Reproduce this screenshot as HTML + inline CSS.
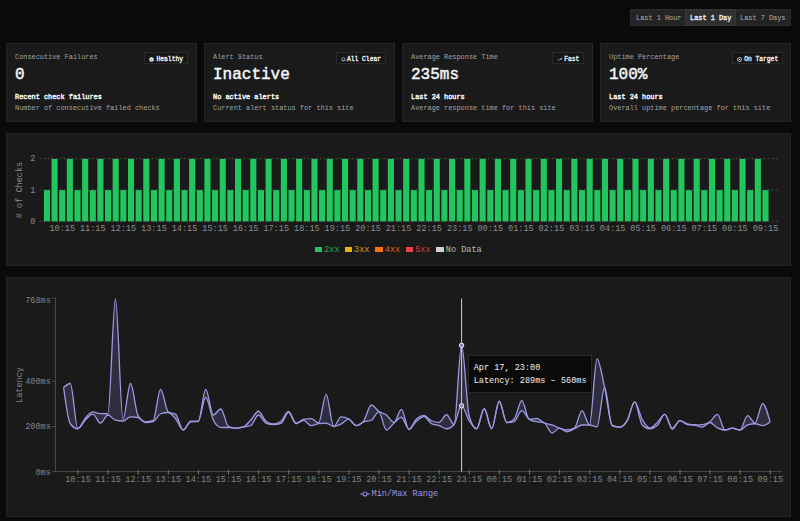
<!DOCTYPE html>
<html><head><meta charset="utf-8"><style>
html,body{margin:0;padding:0;}
body{width:800px;height:521px;overflow:hidden;background:#0a0a0a;position:relative;font-family:"Liberation Mono", monospace;}
.t{position:absolute;white-space:pre;font-family:"Liberation Mono", monospace;}
.b{position:absolute;}
</style></head><body>
<div class="b" style="left:630px;top:9px;width:161px;height:17px;background:#242424;border:1px solid #2c2c2c;box-sizing:border-box;"></div>
<div class="b" style="left:685px;top:9px;width:51px;height:17px;background:#2f2f2f;border:1px solid #383838;box-sizing:border-box;"></div>
<div class="t" style="left:636.00px;top:14.71px;font-size:6.9px;line-height:6.9px;color:#b0b0b0;font-weight:400;letter-spacing:0px;transform:scaleY(1.0);transform-origin:0 5.29px;">Last 1 Hour</div>
<div class="t" style="left:690.00px;top:14.71px;font-size:6.9px;line-height:6.9px;color:#f5f5f5;font-weight:400;letter-spacing:0px;transform:scaleY(1.0);transform-origin:0 5.29px;-webkit-text-stroke:0.3px #f5f5f5;">Last 1 Day</div>
<div class="t" style="left:740.00px;top:14.71px;font-size:6.9px;line-height:6.9px;color:#b0b0b0;font-weight:400;letter-spacing:0px;transform:scaleY(1.0);transform-origin:0 5.29px;">Last 7 Days</div>
<div class="b" style="left:6px;top:43px;width:191px;height:79px;background:#1a1a1a;border:1px solid #242424;box-sizing:border-box;"></div>
<div class="t" style="left:15.00px;top:54.41px;font-size:6.9px;line-height:6.9px;color:#a3a3a3;font-weight:400;letter-spacing:0px;transform:scaleY(1.1);transform-origin:0 5.29px;">Consecutive Failures</div>
<div class="t" style="left:15.00px;top:67.44px;font-size:16px;line-height:16px;color:#f5f5f5;font-weight:400;letter-spacing:0px;transform:scaleY(1.05);transform-origin:0 12.26px;-webkit-text-stroke:0.45px #f5f5f5;">0</div>
<div class="t" style="left:15.00px;top:93.71px;font-size:6.9px;line-height:6.9px;color:#f5f5f5;font-weight:400;letter-spacing:0px;transform:scaleY(1.1);transform-origin:0 5.29px;-webkit-text-stroke:0.4px #f5f5f5;">Recent check failures</div>
<div class="t" style="left:15.00px;top:105.21px;font-size:6.9px;line-height:6.9px;color:#a3a3a3;font-weight:400;letter-spacing:0px;transform:scaleY(1.1);transform-origin:0 5.29px;">Number of consecutive failed checks</div>
<div class="b" style="left:144px;top:52.2px;width:44px;height:12.3px;background:#161616;border:1px solid #2a2a2a;box-sizing:border-box;"></div>
<div class="t" style="left:156.54px;top:57.07px;font-size:6.3px;line-height:6.3px;color:#f5f5f5;font-weight:400;letter-spacing:0px;transform:scaleY(1.0);transform-origin:0 4.83px;-webkit-text-stroke:0.3px #f5f5f5;">Healthy</div>
<svg class="b" style="left:149.2px;top:56.8px" width="5" height="5" viewBox="0 0 24 24"><circle cx="12" cy="12" r="11" fill="#f5f5f5"/><path d="M7 12.5l3.5 3.5 6.5-7" stroke="#171717" stroke-width="3" fill="none"/></svg>
<div class="b" style="left:204px;top:43px;width:191px;height:79px;background:#1a1a1a;border:1px solid #242424;box-sizing:border-box;"></div>
<div class="t" style="left:213.00px;top:54.41px;font-size:6.9px;line-height:6.9px;color:#a3a3a3;font-weight:400;letter-spacing:0px;transform:scaleY(1.1);transform-origin:0 5.29px;">Alert Status</div>
<div class="t" style="left:213.00px;top:67.44px;font-size:16px;line-height:16px;color:#f5f5f5;font-weight:400;letter-spacing:0px;transform:scaleY(1.05);transform-origin:0 12.26px;-webkit-text-stroke:0.45px #f5f5f5;">Inactive</div>
<div class="t" style="left:213.00px;top:93.71px;font-size:6.9px;line-height:6.9px;color:#f5f5f5;font-weight:400;letter-spacing:0px;transform:scaleY(1.1);transform-origin:0 5.29px;-webkit-text-stroke:0.4px #f5f5f5;">No active alerts</div>
<div class="t" style="left:213.00px;top:105.21px;font-size:6.9px;line-height:6.9px;color:#a3a3a3;font-weight:400;letter-spacing:0px;transform:scaleY(1.1);transform-origin:0 5.29px;">Current alert status for this site</div>
<div class="b" style="left:335.5px;top:52.2px;width:50.5px;height:12.3px;background:#161616;border:1px solid #2a2a2a;box-sizing:border-box;"></div>
<div class="t" style="left:346.98px;top:57.07px;font-size:6.3px;line-height:6.3px;color:#f5f5f5;font-weight:400;letter-spacing:0px;transform:scaleY(1.0);transform-origin:0 4.83px;-webkit-text-stroke:0.3px #f5f5f5;">All Clear</div>
<svg class="b" style="left:340.7px;top:56.8px" width="5" height="5" viewBox="0 0 24 24"><path d="M6 8a6 6 0 0 1 12 0c0 7 3 9 3 9H3s3-2 3-9M10.3 21a1.94 1.94 0 0 0 3.4 0" stroke="#f5f5f5" stroke-width="2.6" fill="none"/></svg>
<div class="b" style="left:402px;top:43px;width:191px;height:79px;background:#1a1a1a;border:1px solid #242424;box-sizing:border-box;"></div>
<div class="t" style="left:411.00px;top:54.41px;font-size:6.9px;line-height:6.9px;color:#a3a3a3;font-weight:400;letter-spacing:0px;transform:scaleY(1.1);transform-origin:0 5.29px;">Average Response Time</div>
<div class="t" style="left:411.00px;top:67.44px;font-size:16px;line-height:16px;color:#f5f5f5;font-weight:400;letter-spacing:0px;transform:scaleY(1.05);transform-origin:0 12.26px;-webkit-text-stroke:0.45px #f5f5f5;">235ms</div>
<div class="t" style="left:411.00px;top:93.71px;font-size:6.9px;line-height:6.9px;color:#f5f5f5;font-weight:400;letter-spacing:0px;transform:scaleY(1.1);transform-origin:0 5.29px;-webkit-text-stroke:0.4px #f5f5f5;">Last 24 hours</div>
<div class="t" style="left:411.00px;top:105.21px;font-size:6.9px;line-height:6.9px;color:#a3a3a3;font-weight:400;letter-spacing:0px;transform:scaleY(1.1);transform-origin:0 5.29px;">Average response time for this site</div>
<div class="b" style="left:552px;top:52.2px;width:32.3px;height:12.3px;background:#161616;border:1px solid #2a2a2a;box-sizing:border-box;"></div>
<div class="t" style="left:564.18px;top:57.07px;font-size:6.3px;line-height:6.3px;color:#f5f5f5;font-weight:400;letter-spacing:0px;transform:scaleY(1.0);transform-origin:0 4.83px;-webkit-text-stroke:0.3px #f5f5f5;">Fast</div>
<svg class="b" style="left:557.2px;top:56.8px" width="5" height="5" viewBox="0 0 24 24"><path d="M22 7l-8.5 8.5-5-5L2 17M16 7h6v6" stroke="#f5f5f5" stroke-width="2.6" fill="none"/></svg>
<div class="b" style="left:600px;top:43px;width:191px;height:79px;background:#1a1a1a;border:1px solid #242424;box-sizing:border-box;"></div>
<div class="t" style="left:609.00px;top:54.41px;font-size:6.9px;line-height:6.9px;color:#a3a3a3;font-weight:400;letter-spacing:0px;transform:scaleY(1.1);transform-origin:0 5.29px;">Uptime Percentage</div>
<div class="t" style="left:609.00px;top:67.44px;font-size:16px;line-height:16px;color:#f5f5f5;font-weight:400;letter-spacing:0px;transform:scaleY(1.05);transform-origin:0 12.26px;-webkit-text-stroke:0.45px #f5f5f5;">100%</div>
<div class="t" style="left:609.00px;top:93.71px;font-size:6.9px;line-height:6.9px;color:#f5f5f5;font-weight:400;letter-spacing:0px;transform:scaleY(1.1);transform-origin:0 5.29px;-webkit-text-stroke:0.4px #f5f5f5;">Last 24 hours</div>
<div class="t" style="left:609.00px;top:105.21px;font-size:6.9px;line-height:6.9px;color:#a3a3a3;font-weight:400;letter-spacing:0px;transform:scaleY(1.1);transform-origin:0 5.29px;">Overall uptime percentage for this site</div>
<div class="b" style="left:731.5px;top:52.2px;width:51.7px;height:12.3px;background:#161616;border:1px solid #2a2a2a;box-sizing:border-box;"></div>
<div class="t" style="left:744.18px;top:57.07px;font-size:6.3px;line-height:6.3px;color:#f5f5f5;font-weight:400;letter-spacing:0px;transform:scaleY(1.0);transform-origin:0 4.83px;-webkit-text-stroke:0.3px #f5f5f5;">On Target</div>
<svg class="b" style="left:736.7px;top:56.8px" width="5" height="5" viewBox="0 0 24 24"><circle cx="12" cy="12" r="9.5" stroke="#f5f5f5" stroke-width="3.5" fill="none"/><circle cx="12" cy="12" r="3.5" fill="#f5f5f5"/></svg>
<div class="b" style="left:6px;top:133px;width:785px;height:133px;background:#1a1a1a;border:1px solid #242424;box-sizing:border-box;"></div>
<svg class="b" style="left:0;top:0" width="800" height="521"><line x1="39.6" y1="158.7" x2="777.7" y2="158.7" stroke="#4a4a4a" stroke-width="1" stroke-dasharray="2 2"/><line x1="39.6" y1="189.9" x2="777.7" y2="189.9" stroke="#4a4a4a" stroke-width="1" stroke-dasharray="2 2"/><line x1="39.6" y1="221.3" x2="777.7" y2="221.3" stroke="#4a4a4a" stroke-width="1" stroke-dasharray="2 2"/><rect x="43.87" y="190.10" width="6.1" height="31.20" fill="#22c55e"/><rect x="51.52" y="158.90" width="6.1" height="62.40" fill="#22c55e"/><rect x="59.16" y="190.10" width="6.1" height="31.20" fill="#22c55e"/><rect x="66.80" y="158.90" width="6.1" height="62.40" fill="#22c55e"/><rect x="74.45" y="190.10" width="6.1" height="31.20" fill="#22c55e"/><rect x="82.09" y="158.90" width="6.1" height="62.40" fill="#22c55e"/><rect x="89.74" y="190.10" width="6.1" height="31.20" fill="#22c55e"/><rect x="97.38" y="158.90" width="6.1" height="62.40" fill="#22c55e"/><rect x="105.03" y="190.10" width="6.1" height="31.20" fill="#22c55e"/><rect x="112.67" y="158.90" width="6.1" height="62.40" fill="#22c55e"/><rect x="120.31" y="190.10" width="6.1" height="31.20" fill="#22c55e"/><rect x="127.96" y="158.90" width="6.1" height="62.40" fill="#22c55e"/><rect x="135.60" y="190.10" width="6.1" height="31.20" fill="#22c55e"/><rect x="143.25" y="158.90" width="6.1" height="62.40" fill="#22c55e"/><rect x="150.89" y="190.10" width="6.1" height="31.20" fill="#22c55e"/><rect x="158.54" y="158.90" width="6.1" height="62.40" fill="#22c55e"/><rect x="166.18" y="190.10" width="6.1" height="31.20" fill="#22c55e"/><rect x="173.82" y="158.90" width="6.1" height="62.40" fill="#22c55e"/><rect x="181.47" y="190.10" width="6.1" height="31.20" fill="#22c55e"/><rect x="189.11" y="158.90" width="6.1" height="62.40" fill="#22c55e"/><rect x="196.76" y="190.10" width="6.1" height="31.20" fill="#22c55e"/><rect x="204.40" y="158.90" width="6.1" height="62.40" fill="#22c55e"/><rect x="212.04" y="190.10" width="6.1" height="31.20" fill="#22c55e"/><rect x="219.69" y="158.90" width="6.1" height="62.40" fill="#22c55e"/><rect x="227.33" y="190.10" width="6.1" height="31.20" fill="#22c55e"/><rect x="234.98" y="158.90" width="6.1" height="62.40" fill="#22c55e"/><rect x="242.62" y="190.10" width="6.1" height="31.20" fill="#22c55e"/><rect x="250.27" y="158.90" width="6.1" height="62.40" fill="#22c55e"/><rect x="257.91" y="190.10" width="6.1" height="31.20" fill="#22c55e"/><rect x="265.55" y="158.90" width="6.1" height="62.40" fill="#22c55e"/><rect x="273.20" y="190.10" width="6.1" height="31.20" fill="#22c55e"/><rect x="280.84" y="158.90" width="6.1" height="62.40" fill="#22c55e"/><rect x="288.49" y="190.10" width="6.1" height="31.20" fill="#22c55e"/><rect x="296.13" y="158.90" width="6.1" height="62.40" fill="#22c55e"/><rect x="303.78" y="190.10" width="6.1" height="31.20" fill="#22c55e"/><rect x="311.42" y="158.90" width="6.1" height="62.40" fill="#22c55e"/><rect x="319.06" y="190.10" width="6.1" height="31.20" fill="#22c55e"/><rect x="326.71" y="158.90" width="6.1" height="62.40" fill="#22c55e"/><rect x="334.35" y="190.10" width="6.1" height="31.20" fill="#22c55e"/><rect x="342.00" y="158.90" width="6.1" height="62.40" fill="#22c55e"/><rect x="349.64" y="190.10" width="6.1" height="31.20" fill="#22c55e"/><rect x="357.28" y="158.90" width="6.1" height="62.40" fill="#22c55e"/><rect x="364.93" y="190.10" width="6.1" height="31.20" fill="#22c55e"/><rect x="372.57" y="158.90" width="6.1" height="62.40" fill="#22c55e"/><rect x="380.22" y="190.10" width="6.1" height="31.20" fill="#22c55e"/><rect x="387.86" y="158.90" width="6.1" height="62.40" fill="#22c55e"/><rect x="395.51" y="190.10" width="6.1" height="31.20" fill="#22c55e"/><rect x="403.15" y="158.90" width="6.1" height="62.40" fill="#22c55e"/><rect x="410.79" y="190.10" width="6.1" height="31.20" fill="#22c55e"/><rect x="418.44" y="158.90" width="6.1" height="62.40" fill="#22c55e"/><rect x="426.08" y="190.10" width="6.1" height="31.20" fill="#22c55e"/><rect x="433.73" y="158.90" width="6.1" height="62.40" fill="#22c55e"/><rect x="441.37" y="190.10" width="6.1" height="31.20" fill="#22c55e"/><rect x="449.02" y="158.90" width="6.1" height="62.40" fill="#22c55e"/><rect x="456.66" y="190.10" width="6.1" height="31.20" fill="#22c55e"/><rect x="464.30" y="158.90" width="6.1" height="62.40" fill="#22c55e"/><rect x="471.95" y="190.10" width="6.1" height="31.20" fill="#22c55e"/><rect x="479.59" y="158.90" width="6.1" height="62.40" fill="#22c55e"/><rect x="487.24" y="190.10" width="6.1" height="31.20" fill="#22c55e"/><rect x="494.88" y="158.90" width="6.1" height="62.40" fill="#22c55e"/><rect x="502.52" y="190.10" width="6.1" height="31.20" fill="#22c55e"/><rect x="510.17" y="158.90" width="6.1" height="62.40" fill="#22c55e"/><rect x="517.81" y="190.10" width="6.1" height="31.20" fill="#22c55e"/><rect x="525.46" y="158.90" width="6.1" height="62.40" fill="#22c55e"/><rect x="533.10" y="190.10" width="6.1" height="31.20" fill="#22c55e"/><rect x="540.75" y="158.90" width="6.1" height="62.40" fill="#22c55e"/><rect x="548.39" y="190.10" width="6.1" height="31.20" fill="#22c55e"/><rect x="556.03" y="158.90" width="6.1" height="62.40" fill="#22c55e"/><rect x="563.68" y="190.10" width="6.1" height="31.20" fill="#22c55e"/><rect x="571.32" y="158.90" width="6.1" height="62.40" fill="#22c55e"/><rect x="578.97" y="190.10" width="6.1" height="31.20" fill="#22c55e"/><rect x="586.61" y="158.90" width="6.1" height="62.40" fill="#22c55e"/><rect x="594.26" y="190.10" width="6.1" height="31.20" fill="#22c55e"/><rect x="601.90" y="158.90" width="6.1" height="62.40" fill="#22c55e"/><rect x="609.54" y="190.10" width="6.1" height="31.20" fill="#22c55e"/><rect x="617.19" y="158.90" width="6.1" height="62.40" fill="#22c55e"/><rect x="624.83" y="190.10" width="6.1" height="31.20" fill="#22c55e"/><rect x="632.48" y="158.90" width="6.1" height="62.40" fill="#22c55e"/><rect x="640.12" y="190.10" width="6.1" height="31.20" fill="#22c55e"/><rect x="647.76" y="158.90" width="6.1" height="62.40" fill="#22c55e"/><rect x="655.41" y="190.10" width="6.1" height="31.20" fill="#22c55e"/><rect x="663.05" y="158.90" width="6.1" height="62.40" fill="#22c55e"/><rect x="670.70" y="190.10" width="6.1" height="31.20" fill="#22c55e"/><rect x="678.34" y="158.90" width="6.1" height="62.40" fill="#22c55e"/><rect x="685.99" y="190.10" width="6.1" height="31.20" fill="#22c55e"/><rect x="693.63" y="158.90" width="6.1" height="62.40" fill="#22c55e"/><rect x="701.27" y="190.10" width="6.1" height="31.20" fill="#22c55e"/><rect x="708.92" y="158.90" width="6.1" height="62.40" fill="#22c55e"/><rect x="716.56" y="190.10" width="6.1" height="31.20" fill="#22c55e"/><rect x="724.21" y="158.90" width="6.1" height="62.40" fill="#22c55e"/><rect x="731.85" y="190.10" width="6.1" height="31.20" fill="#22c55e"/><rect x="739.50" y="158.90" width="6.1" height="62.40" fill="#22c55e"/><rect x="747.14" y="190.10" width="6.1" height="31.20" fill="#22c55e"/><rect x="754.78" y="158.90" width="6.1" height="62.40" fill="#22c55e"/><rect x="762.43" y="190.10" width="6.1" height="31.20" fill="#22c55e"/></svg>
<div class="t" style="left:62.21px;top:224.95px;font-size:8.55px;line-height:8.55px;color:#8a8a8a;font-weight:400;letter-spacing:0px;transform:translateX(-50%) scaleY(1.0);transform-origin:0 6.55px;">10:15</div>
<div class="t" style="left:92.79px;top:224.95px;font-size:8.55px;line-height:8.55px;color:#8a8a8a;font-weight:400;letter-spacing:0px;transform:translateX(-50%) scaleY(1.0);transform-origin:0 6.55px;">11:15</div>
<div class="t" style="left:123.36px;top:224.95px;font-size:8.55px;line-height:8.55px;color:#8a8a8a;font-weight:400;letter-spacing:0px;transform:translateX(-50%) scaleY(1.0);transform-origin:0 6.55px;">12:15</div>
<div class="t" style="left:153.94px;top:224.95px;font-size:8.55px;line-height:8.55px;color:#8a8a8a;font-weight:400;letter-spacing:0px;transform:translateX(-50%) scaleY(1.0);transform-origin:0 6.55px;">13:15</div>
<div class="t" style="left:184.52px;top:224.95px;font-size:8.55px;line-height:8.55px;color:#8a8a8a;font-weight:400;letter-spacing:0px;transform:translateX(-50%) scaleY(1.0);transform-origin:0 6.55px;">14:15</div>
<div class="t" style="left:215.09px;top:224.95px;font-size:8.55px;line-height:8.55px;color:#8a8a8a;font-weight:400;letter-spacing:0px;transform:translateX(-50%) scaleY(1.0);transform-origin:0 6.55px;">15:15</div>
<div class="t" style="left:245.67px;top:224.95px;font-size:8.55px;line-height:8.55px;color:#8a8a8a;font-weight:400;letter-spacing:0px;transform:translateX(-50%) scaleY(1.0);transform-origin:0 6.55px;">16:15</div>
<div class="t" style="left:276.25px;top:224.95px;font-size:8.55px;line-height:8.55px;color:#8a8a8a;font-weight:400;letter-spacing:0px;transform:translateX(-50%) scaleY(1.0);transform-origin:0 6.55px;">17:15</div>
<div class="t" style="left:306.83px;top:224.95px;font-size:8.55px;line-height:8.55px;color:#8a8a8a;font-weight:400;letter-spacing:0px;transform:translateX(-50%) scaleY(1.0);transform-origin:0 6.55px;">18:15</div>
<div class="t" style="left:337.40px;top:224.95px;font-size:8.55px;line-height:8.55px;color:#8a8a8a;font-weight:400;letter-spacing:0px;transform:translateX(-50%) scaleY(1.0);transform-origin:0 6.55px;">19:15</div>
<div class="t" style="left:367.98px;top:224.95px;font-size:8.55px;line-height:8.55px;color:#8a8a8a;font-weight:400;letter-spacing:0px;transform:translateX(-50%) scaleY(1.0);transform-origin:0 6.55px;">20:15</div>
<div class="t" style="left:398.56px;top:224.95px;font-size:8.55px;line-height:8.55px;color:#8a8a8a;font-weight:400;letter-spacing:0px;transform:translateX(-50%) scaleY(1.0);transform-origin:0 6.55px;">21:15</div>
<div class="t" style="left:429.13px;top:224.95px;font-size:8.55px;line-height:8.55px;color:#8a8a8a;font-weight:400;letter-spacing:0px;transform:translateX(-50%) scaleY(1.0);transform-origin:0 6.55px;">22:15</div>
<div class="t" style="left:459.71px;top:224.95px;font-size:8.55px;line-height:8.55px;color:#8a8a8a;font-weight:400;letter-spacing:0px;transform:translateX(-50%) scaleY(1.0);transform-origin:0 6.55px;">23:15</div>
<div class="t" style="left:490.29px;top:224.95px;font-size:8.55px;line-height:8.55px;color:#8a8a8a;font-weight:400;letter-spacing:0px;transform:translateX(-50%) scaleY(1.0);transform-origin:0 6.55px;">00:15</div>
<div class="t" style="left:520.86px;top:224.95px;font-size:8.55px;line-height:8.55px;color:#8a8a8a;font-weight:400;letter-spacing:0px;transform:translateX(-50%) scaleY(1.0);transform-origin:0 6.55px;">01:15</div>
<div class="t" style="left:551.44px;top:224.95px;font-size:8.55px;line-height:8.55px;color:#8a8a8a;font-weight:400;letter-spacing:0px;transform:translateX(-50%) scaleY(1.0);transform-origin:0 6.55px;">02:15</div>
<div class="t" style="left:582.02px;top:224.95px;font-size:8.55px;line-height:8.55px;color:#8a8a8a;font-weight:400;letter-spacing:0px;transform:translateX(-50%) scaleY(1.0);transform-origin:0 6.55px;">03:15</div>
<div class="t" style="left:612.59px;top:224.95px;font-size:8.55px;line-height:8.55px;color:#8a8a8a;font-weight:400;letter-spacing:0px;transform:translateX(-50%) scaleY(1.0);transform-origin:0 6.55px;">04:15</div>
<div class="t" style="left:643.17px;top:224.95px;font-size:8.55px;line-height:8.55px;color:#8a8a8a;font-weight:400;letter-spacing:0px;transform:translateX(-50%) scaleY(1.0);transform-origin:0 6.55px;">05:15</div>
<div class="t" style="left:673.75px;top:224.95px;font-size:8.55px;line-height:8.55px;color:#8a8a8a;font-weight:400;letter-spacing:0px;transform:translateX(-50%) scaleY(1.0);transform-origin:0 6.55px;">06:15</div>
<div class="t" style="left:704.32px;top:224.95px;font-size:8.55px;line-height:8.55px;color:#8a8a8a;font-weight:400;letter-spacing:0px;transform:translateX(-50%) scaleY(1.0);transform-origin:0 6.55px;">07:15</div>
<div class="t" style="left:734.90px;top:224.95px;font-size:8.55px;line-height:8.55px;color:#8a8a8a;font-weight:400;letter-spacing:0px;transform:translateX(-50%) scaleY(1.0);transform-origin:0 6.55px;">08:15</div>
<div class="t" style="left:765.48px;top:224.95px;font-size:8.55px;line-height:8.55px;color:#8a8a8a;font-weight:400;letter-spacing:0px;transform:translateX(-50%) scaleY(1.0);transform-origin:0 6.55px;">09:15</div>
<div class="t" style="left:35.40px;top:155.35px;font-size:8.55px;line-height:8.55px;color:#8a8a8a;font-weight:400;letter-spacing:0px;transform:translateX(-100%) scaleY(1.0);transform-origin:0 6.55px;">2</div>
<div class="t" style="left:35.40px;top:186.65px;font-size:8.55px;line-height:8.55px;color:#8a8a8a;font-weight:400;letter-spacing:0px;transform:translateX(-100%) scaleY(1.0);transform-origin:0 6.55px;">1</div>
<div class="t" style="left:35.40px;top:217.55px;font-size:8.55px;line-height:8.55px;color:#8a8a8a;font-weight:400;letter-spacing:0px;transform:translateX(-100%) scaleY(1.0);transform-origin:0 6.55px;">0</div>
<div class="t" style="left:19.5px;top:190px;font-size:8.55px;line-height:8.55px;color:#8a8a8a;transform:translate(-50%,-50%) rotate(-90deg);">&#35; of Checks</div>
<div class="b" style="left:314.65px;top:246.5px;width:7.5px;height:5.7px;background:#22c55e;box-sizing:border-box;"></div>
<div class="t" style="left:324.15px;top:245.65px;font-size:8.55px;line-height:8.55px;color:#22c55e;font-weight:400;letter-spacing:0px;transform:scaleY(1.0);transform-origin:0 6.55px;opacity:0.85;">2xx</div>
<div class="b" style="left:344.5px;top:246.5px;width:7.5px;height:5.7px;background:#eab308;box-sizing:border-box;"></div>
<div class="t" style="left:354.00px;top:245.65px;font-size:8.55px;line-height:8.55px;color:#eab308;font-weight:400;letter-spacing:0px;transform:scaleY(1.0);transform-origin:0 6.55px;opacity:0.85;">3xx</div>
<div class="b" style="left:375.3px;top:246.5px;width:7.5px;height:5.7px;background:#f97316;box-sizing:border-box;"></div>
<div class="t" style="left:384.80px;top:245.65px;font-size:8.55px;line-height:8.55px;color:#f97316;font-weight:400;letter-spacing:0px;transform:scaleY(1.0);transform-origin:0 6.55px;opacity:0.85;">4xx</div>
<div class="b" style="left:405.7px;top:246.5px;width:7.5px;height:5.7px;background:#ef4444;box-sizing:border-box;"></div>
<div class="t" style="left:415.20px;top:245.65px;font-size:8.55px;line-height:8.55px;color:#ef4444;font-weight:400;letter-spacing:0px;transform:scaleY(1.0);transform-origin:0 6.55px;opacity:0.85;">5xx</div>
<div class="b" style="left:436.3px;top:246.5px;width:7.5px;height:5.7px;background:#d4d4d4;box-sizing:border-box;"></div>
<div class="t" style="left:445.80px;top:245.65px;font-size:8.55px;line-height:8.55px;color:#d4d4d4;font-weight:400;letter-spacing:0px;transform:scaleY(1.0);transform-origin:0 6.55px;opacity:0.85;">No Data</div>
<div class="b" style="left:6px;top:277px;width:785px;height:240px;background:#1a1a1a;border:1px solid #242424;box-sizing:border-box;"></div>
<svg class="b" style="left:0;top:0" width="800" height="521"><line x1="55.4" y1="297.5" x2="55.4" y2="471.6" stroke="#4c4c4c" stroke-width="1"/><line x1="55.4" y1="471.6" x2="782.2" y2="471.6" stroke="#4c4c4c" stroke-width="1"/><line x1="52.4" y1="298.1" x2="55.4" y2="298.1" stroke="#4c4c4c" stroke-width="1"/><line x1="52.4" y1="381.3" x2="55.4" y2="381.3" stroke="#4c4c4c" stroke-width="1"/><line x1="52.4" y1="426.5" x2="55.4" y2="426.5" stroke="#4c4c4c" stroke-width="1"/><line x1="52.4" y1="471.6" x2="55.4" y2="471.6" stroke="#4c4c4c" stroke-width="1"/><line x1="78.00" y1="469.8" x2="78.00" y2="474.6" stroke="#707070" stroke-width="1"/><line x1="108.10" y1="469.8" x2="108.10" y2="474.6" stroke="#707070" stroke-width="1"/><line x1="138.20" y1="469.8" x2="138.20" y2="474.6" stroke="#707070" stroke-width="1"/><line x1="168.30" y1="469.8" x2="168.30" y2="474.6" stroke="#707070" stroke-width="1"/><line x1="198.40" y1="469.8" x2="198.40" y2="474.6" stroke="#707070" stroke-width="1"/><line x1="228.50" y1="469.8" x2="228.50" y2="474.6" stroke="#707070" stroke-width="1"/><line x1="258.60" y1="469.8" x2="258.60" y2="474.6" stroke="#707070" stroke-width="1"/><line x1="288.70" y1="469.8" x2="288.70" y2="474.6" stroke="#707070" stroke-width="1"/><line x1="318.80" y1="469.8" x2="318.80" y2="474.6" stroke="#707070" stroke-width="1"/><line x1="348.90" y1="469.8" x2="348.90" y2="474.6" stroke="#707070" stroke-width="1"/><line x1="379.00" y1="469.8" x2="379.00" y2="474.6" stroke="#707070" stroke-width="1"/><line x1="409.10" y1="469.8" x2="409.10" y2="474.6" stroke="#707070" stroke-width="1"/><line x1="439.20" y1="469.8" x2="439.20" y2="474.6" stroke="#707070" stroke-width="1"/><line x1="469.30" y1="469.8" x2="469.30" y2="474.6" stroke="#707070" stroke-width="1"/><line x1="499.40" y1="469.8" x2="499.40" y2="474.6" stroke="#707070" stroke-width="1"/><line x1="529.50" y1="469.8" x2="529.50" y2="474.6" stroke="#707070" stroke-width="1"/><line x1="559.60" y1="469.8" x2="559.60" y2="474.6" stroke="#707070" stroke-width="1"/><line x1="589.70" y1="469.8" x2="589.70" y2="474.6" stroke="#707070" stroke-width="1"/><line x1="619.80" y1="469.8" x2="619.80" y2="474.6" stroke="#707070" stroke-width="1"/><line x1="649.90" y1="469.8" x2="649.90" y2="474.6" stroke="#707070" stroke-width="1"/><line x1="680.00" y1="469.8" x2="680.00" y2="474.6" stroke="#707070" stroke-width="1"/><line x1="710.10" y1="469.8" x2="710.10" y2="474.6" stroke="#707070" stroke-width="1"/><line x1="740.20" y1="469.8" x2="740.20" y2="474.6" stroke="#707070" stroke-width="1"/><line x1="770.30" y1="469.8" x2="770.30" y2="474.6" stroke="#707070" stroke-width="1"/><path d="M63.60,387.50C65.83,385.50 68.07,383.50 70.30,383.50C72.81,383.50 75.32,428.50 77.82,428.50C80.33,428.50 82.84,420.87 85.35,418.10C87.86,415.33 90.37,411.90 92.88,411.90C95.38,411.90 97.89,413.69 100.40,413.72C102.91,413.74 105.42,413.75 107.93,413.75C110.43,413.75 112.94,298.75 115.45,298.75C117.96,298.75 120.47,419.40 122.98,419.40C125.48,419.40 127.99,383.50 130.50,383.50C133.01,383.50 135.52,411.44 138.03,415.62C140.53,419.81 143.04,421.90 145.55,421.90C148.06,421.90 150.57,421.51 153.07,420.73C155.58,419.95 158.09,389.40 160.60,389.40C163.11,389.40 165.62,410.02 168.12,411.77C170.63,413.52 173.14,412.65 175.65,414.40C178.16,416.15 180.67,430.00 183.18,430.00C185.68,430.00 188.19,421.25 190.70,421.25C193.21,421.25 195.72,421.25 198.23,421.25C200.73,421.25 203.24,389.40 205.75,389.40C208.26,389.40 210.77,415.00 213.28,415.00C215.78,415.00 218.29,409.00 220.80,409.00C223.31,409.00 225.82,425.00 228.33,426.25C230.83,427.50 233.34,428.13 235.85,428.13C238.36,428.13 240.87,427.72 243.38,426.90C245.88,426.08 248.39,422.61 250.90,420.00C253.41,417.39 255.92,411.25 258.43,411.25C260.93,411.25 263.44,419.41 265.95,421.25C268.46,423.09 270.97,424.00 273.48,424.00C275.98,424.00 278.49,423.09 281.00,421.25C283.51,419.41 286.02,411.50 288.52,411.50C291.03,411.50 293.54,423.10 296.05,423.10C298.56,423.10 301.07,419.90 303.58,419.40C306.08,418.90 308.59,418.66 311.10,418.66C313.61,418.66 316.12,422.88 318.62,422.88C321.13,422.88 323.64,394.40 326.15,394.40C328.66,394.40 331.17,426.49 333.68,426.49C336.18,426.49 338.69,416.90 341.20,416.90C343.71,416.90 346.22,417.61 348.73,419.03C351.23,420.45 353.74,425.60 356.25,425.60C358.76,425.60 361.27,424.01 363.78,420.82C366.28,417.63 368.79,405.00 371.30,405.00C373.81,405.00 376.32,409.86 378.83,411.53C381.33,413.20 383.84,413.17 386.35,415.00C388.86,416.83 391.37,422.50 393.88,422.50C396.38,422.50 398.89,409.40 401.40,409.40C403.91,409.40 406.42,429.40 408.93,429.40C411.43,429.40 413.94,421.17 416.45,418.90C418.96,416.63 421.47,415.49 423.98,415.49C426.48,415.49 428.99,419.72 431.50,420.76C434.01,421.80 436.52,422.32 439.03,422.32C441.53,422.32 444.04,414.75 446.55,414.75C449.06,414.75 451.57,424.47 454.08,424.47C456.58,424.47 459.09,345.40 461.60,345.40C464.11,345.40 466.62,407.08 469.12,415.75C471.63,424.42 474.14,428.75 476.65,428.75C479.16,428.75 481.67,408.75 484.18,408.75C486.68,408.75 489.19,428.75 491.70,428.75C494.21,428.75 496.72,401.25 499.23,401.25C501.73,401.25 504.24,422.50 506.75,422.50C509.26,422.50 511.77,421.32 514.27,418.96C516.78,416.59 519.29,400.60 521.80,400.60C524.31,400.60 526.82,419.38 529.33,419.38C531.83,419.38 534.34,418.50 536.85,418.50C539.36,418.50 541.87,421.93 544.38,423.00C546.88,424.07 549.39,424.09 551.90,424.94C554.41,425.79 556.92,427.26 559.43,428.10C561.93,428.94 564.44,430.00 566.95,430.00C569.46,430.00 571.97,429.37 574.48,428.10C576.98,426.83 579.49,410.60 582.00,410.60C584.51,410.60 587.02,425.00 589.53,425.00C592.03,425.00 594.54,359.00 597.05,359.00C599.56,359.00 602.07,376.20 604.58,387.20C607.08,398.20 609.59,423.52 612.10,425.00C614.61,426.48 617.12,427.22 619.62,427.22C622.13,427.22 624.64,424.92 627.15,420.70C629.66,416.48 632.17,401.90 634.68,401.90C637.18,401.90 639.69,415.03 642.20,419.40C644.71,423.77 647.22,428.10 649.73,428.10C652.23,428.10 654.74,424.78 657.25,422.50C659.76,420.22 662.27,414.40 664.78,414.40C667.28,414.40 669.79,428.10 672.30,428.10C674.81,428.10 677.32,420.60 679.83,420.60C682.33,420.60 684.84,423.32 687.35,423.99C689.86,424.66 692.37,425.00 694.88,425.00C697.38,425.00 699.89,424.88 702.40,424.64C704.91,424.40 707.42,423.45 709.93,421.74C712.43,420.03 714.94,414.40 717.45,414.40C719.96,414.40 722.47,430.00 724.98,430.00C727.48,430.00 729.99,428.10 732.50,428.10C735.01,428.10 737.52,430.00 740.03,430.00C742.53,430.00 745.04,415.60 747.55,415.60C750.06,415.60 752.57,423.10 755.08,423.10C757.58,423.10 760.09,403.75 762.60,403.75C765.11,403.75 767.62,412.82 770.12,421.90 L770.12,421.90C767.62,423.75 765.11,425.60 762.60,425.60C760.09,425.60 757.58,423.75 755.08,423.75C752.57,423.75 750.06,424.16 747.55,424.97C745.04,425.78 742.53,430.00 740.03,430.00C737.52,430.00 735.01,428.10 732.50,428.10C729.99,428.10 727.48,430.00 724.98,430.00C722.47,430.00 719.96,429.12 717.45,427.87C714.94,426.62 712.43,422.50 709.93,422.50C707.42,422.50 704.91,427.11 702.40,427.11C699.89,427.11 697.38,425.31 694.88,425.00C692.37,424.69 689.86,424.85 687.35,424.54C684.84,424.24 682.33,420.60 679.83,420.60C677.32,420.60 674.81,429.40 672.30,429.40C669.79,429.40 667.28,414.40 664.78,414.40C662.27,414.40 659.76,423.33 657.25,425.50C654.74,427.67 652.23,428.75 649.73,428.75C647.22,428.75 644.71,427.50 642.20,425.00C639.69,422.50 637.18,401.90 634.68,401.90C632.17,401.90 629.66,416.48 627.15,420.70C624.64,424.92 622.13,427.22 619.62,427.22C617.12,427.22 614.61,426.77 612.10,425.87C609.59,424.97 607.08,387.50 604.58,387.50C602.07,387.50 599.56,426.90 597.05,426.90C594.54,426.90 592.03,425.00 589.53,425.00C587.02,425.00 584.51,425.00 582.00,425.00C579.49,425.00 576.98,427.60 574.48,428.75C571.97,429.90 569.46,431.90 566.95,431.90C564.44,431.90 561.93,428.13 559.43,428.13C556.92,428.13 554.41,433.10 551.90,433.10C549.39,433.10 546.88,423.87 544.38,423.00C541.87,422.13 539.36,422.30 536.85,421.70C534.34,421.10 531.83,420.93 529.33,419.38C526.82,417.84 524.31,410.60 521.80,410.60C519.29,410.60 516.78,420.84 514.27,421.51C511.77,422.17 509.26,422.50 506.75,422.50C504.24,422.50 501.73,401.25 499.23,401.25C496.72,401.25 494.21,428.75 491.70,428.75C489.19,428.75 486.68,408.75 484.18,408.75C481.67,408.75 479.16,428.75 476.65,428.75C474.14,428.75 471.63,424.47 469.12,420.61C466.62,416.75 464.11,405.60 461.60,405.60C459.09,405.60 456.58,421.62 454.08,424.47C451.57,427.32 449.06,428.75 446.55,428.75C444.04,428.75 441.53,426.46 439.03,425.60C436.52,424.74 434.01,424.94 431.50,423.61C428.99,422.28 426.48,416.63 423.98,416.63C421.47,416.63 418.96,419.17 416.45,421.30C413.94,423.43 411.43,429.40 408.93,429.40C406.42,429.40 403.91,417.25 401.40,417.25C398.89,417.25 396.38,421.08 393.88,423.20C391.37,425.33 388.86,430.00 386.35,430.00C383.84,430.00 381.33,411.90 378.83,411.90C376.32,411.90 373.81,419.27 371.30,420.27C368.79,421.28 366.28,420.90 363.78,421.79C361.27,422.68 358.76,425.60 356.25,425.60C353.74,425.60 351.23,419.03 348.73,419.03C346.22,419.03 343.71,422.70 341.20,423.94C338.69,425.19 336.18,426.49 333.68,426.49C331.17,426.49 328.66,423.10 326.15,423.10C323.64,423.10 321.13,423.29 318.62,423.67C316.12,424.04 313.61,425.60 311.10,425.60C308.59,425.60 306.08,420.36 303.58,420.36C301.07,420.36 298.56,423.75 296.05,423.75C293.54,423.75 291.03,412.25 288.52,412.25C286.02,412.25 283.51,422.66 281.00,423.48C278.49,424.30 275.98,424.71 273.48,424.71C270.97,424.71 268.46,424.17 265.95,423.10C263.44,422.03 260.93,415.00 258.43,415.00C255.92,415.00 253.41,424.57 250.90,425.50C248.39,426.43 245.88,426.43 243.38,426.90C240.87,427.37 238.36,428.33 235.85,428.33C233.34,428.33 230.83,427.50 228.33,427.50C225.82,427.50 223.31,427.50 220.80,427.50C218.29,427.50 215.78,425.00 213.28,420.00C210.77,415.00 208.26,397.50 205.75,397.50C203.24,397.50 200.73,420.95 198.23,421.33C195.72,421.71 193.21,421.52 190.70,421.90C188.19,422.28 185.68,430.00 183.18,430.00C180.67,430.00 178.16,421.67 175.65,418.75C173.14,415.83 170.63,412.50 168.12,412.50C165.62,412.50 163.11,412.92 160.60,413.75C158.09,414.58 155.58,420.83 153.07,421.50C150.57,422.17 148.06,422.50 145.55,422.50C143.04,422.50 140.53,417.90 138.03,417.50C135.52,417.10 133.01,416.90 130.50,416.90C127.99,416.90 125.48,421.00 122.98,421.00C120.47,421.00 117.96,420.72 115.45,420.17C112.94,419.62 110.43,415.00 107.93,415.00C105.42,415.00 102.91,423.10 100.40,423.10C97.89,423.10 95.38,414.09 92.88,414.09C90.37,414.09 87.86,417.56 85.35,420.00C82.84,422.44 80.33,428.75 77.82,428.75C75.32,428.75 72.81,427.08 70.30,423.75C68.07,420.78 65.83,404.14 63.60,387.50Z" fill="#8884d8" fill-opacity="0.2" stroke="none"/><path d="M63.60,387.50C65.83,385.50 68.07,383.50 70.30,383.50C72.81,383.50 75.32,428.50 77.82,428.50C80.33,428.50 82.84,420.87 85.35,418.10C87.86,415.33 90.37,411.90 92.88,411.90C95.38,411.90 97.89,413.69 100.40,413.72C102.91,413.74 105.42,413.75 107.93,413.75C110.43,413.75 112.94,298.75 115.45,298.75C117.96,298.75 120.47,419.40 122.98,419.40C125.48,419.40 127.99,383.50 130.50,383.50C133.01,383.50 135.52,411.44 138.03,415.62C140.53,419.81 143.04,421.90 145.55,421.90C148.06,421.90 150.57,421.51 153.07,420.73C155.58,419.95 158.09,389.40 160.60,389.40C163.11,389.40 165.62,410.02 168.12,411.77C170.63,413.52 173.14,412.65 175.65,414.40C178.16,416.15 180.67,430.00 183.18,430.00C185.68,430.00 188.19,421.25 190.70,421.25C193.21,421.25 195.72,421.25 198.23,421.25C200.73,421.25 203.24,389.40 205.75,389.40C208.26,389.40 210.77,415.00 213.28,415.00C215.78,415.00 218.29,409.00 220.80,409.00C223.31,409.00 225.82,425.00 228.33,426.25C230.83,427.50 233.34,428.13 235.85,428.13C238.36,428.13 240.87,427.72 243.38,426.90C245.88,426.08 248.39,422.61 250.90,420.00C253.41,417.39 255.92,411.25 258.43,411.25C260.93,411.25 263.44,419.41 265.95,421.25C268.46,423.09 270.97,424.00 273.48,424.00C275.98,424.00 278.49,423.09 281.00,421.25C283.51,419.41 286.02,411.50 288.52,411.50C291.03,411.50 293.54,423.10 296.05,423.10C298.56,423.10 301.07,419.90 303.58,419.40C306.08,418.90 308.59,418.66 311.10,418.66C313.61,418.66 316.12,422.88 318.62,422.88C321.13,422.88 323.64,394.40 326.15,394.40C328.66,394.40 331.17,426.49 333.68,426.49C336.18,426.49 338.69,416.90 341.20,416.90C343.71,416.90 346.22,417.61 348.73,419.03C351.23,420.45 353.74,425.60 356.25,425.60C358.76,425.60 361.27,424.01 363.78,420.82C366.28,417.63 368.79,405.00 371.30,405.00C373.81,405.00 376.32,409.86 378.83,411.53C381.33,413.20 383.84,413.17 386.35,415.00C388.86,416.83 391.37,422.50 393.88,422.50C396.38,422.50 398.89,409.40 401.40,409.40C403.91,409.40 406.42,429.40 408.93,429.40C411.43,429.40 413.94,421.17 416.45,418.90C418.96,416.63 421.47,415.49 423.98,415.49C426.48,415.49 428.99,419.72 431.50,420.76C434.01,421.80 436.52,422.32 439.03,422.32C441.53,422.32 444.04,414.75 446.55,414.75C449.06,414.75 451.57,424.47 454.08,424.47C456.58,424.47 459.09,345.40 461.60,345.40C464.11,345.40 466.62,407.08 469.12,415.75C471.63,424.42 474.14,428.75 476.65,428.75C479.16,428.75 481.67,408.75 484.18,408.75C486.68,408.75 489.19,428.75 491.70,428.75C494.21,428.75 496.72,401.25 499.23,401.25C501.73,401.25 504.24,422.50 506.75,422.50C509.26,422.50 511.77,421.32 514.27,418.96C516.78,416.59 519.29,400.60 521.80,400.60C524.31,400.60 526.82,419.38 529.33,419.38C531.83,419.38 534.34,418.50 536.85,418.50C539.36,418.50 541.87,421.93 544.38,423.00C546.88,424.07 549.39,424.09 551.90,424.94C554.41,425.79 556.92,427.26 559.43,428.10C561.93,428.94 564.44,430.00 566.95,430.00C569.46,430.00 571.97,429.37 574.48,428.10C576.98,426.83 579.49,410.60 582.00,410.60C584.51,410.60 587.02,425.00 589.53,425.00C592.03,425.00 594.54,359.00 597.05,359.00C599.56,359.00 602.07,376.20 604.58,387.20C607.08,398.20 609.59,423.52 612.10,425.00C614.61,426.48 617.12,427.22 619.62,427.22C622.13,427.22 624.64,424.92 627.15,420.70C629.66,416.48 632.17,401.90 634.68,401.90C637.18,401.90 639.69,415.03 642.20,419.40C644.71,423.77 647.22,428.10 649.73,428.10C652.23,428.10 654.74,424.78 657.25,422.50C659.76,420.22 662.27,414.40 664.78,414.40C667.28,414.40 669.79,428.10 672.30,428.10C674.81,428.10 677.32,420.60 679.83,420.60C682.33,420.60 684.84,423.32 687.35,423.99C689.86,424.66 692.37,425.00 694.88,425.00C697.38,425.00 699.89,424.88 702.40,424.64C704.91,424.40 707.42,423.45 709.93,421.74C712.43,420.03 714.94,414.40 717.45,414.40C719.96,414.40 722.47,430.00 724.98,430.00C727.48,430.00 729.99,428.10 732.50,428.10C735.01,428.10 737.52,430.00 740.03,430.00C742.53,430.00 745.04,415.60 747.55,415.60C750.06,415.60 752.57,423.10 755.08,423.10C757.58,423.10 760.09,403.75 762.60,403.75C765.11,403.75 767.62,412.82 770.12,421.90" fill="none" stroke="#9d99e3" stroke-width="1.3"/><path d="M63.60,387.50C65.83,404.14 68.07,420.78 70.30,423.75C72.81,427.08 75.32,428.75 77.82,428.75C80.33,428.75 82.84,422.44 85.35,420.00C87.86,417.56 90.37,414.09 92.88,414.09C95.38,414.09 97.89,423.10 100.40,423.10C102.91,423.10 105.42,415.00 107.93,415.00C110.43,415.00 112.94,419.62 115.45,420.17C117.96,420.72 120.47,421.00 122.98,421.00C125.48,421.00 127.99,416.90 130.50,416.90C133.01,416.90 135.52,417.10 138.03,417.50C140.53,417.90 143.04,422.50 145.55,422.50C148.06,422.50 150.57,422.17 153.07,421.50C155.58,420.83 158.09,414.58 160.60,413.75C163.11,412.92 165.62,412.50 168.12,412.50C170.63,412.50 173.14,415.83 175.65,418.75C178.16,421.67 180.67,430.00 183.18,430.00C185.68,430.00 188.19,422.28 190.70,421.90C193.21,421.52 195.72,421.71 198.23,421.33C200.73,420.95 203.24,397.50 205.75,397.50C208.26,397.50 210.77,415.00 213.28,420.00C215.78,425.00 218.29,427.50 220.80,427.50C223.31,427.50 225.82,427.50 228.33,427.50C230.83,427.50 233.34,428.33 235.85,428.33C238.36,428.33 240.87,427.37 243.38,426.90C245.88,426.43 248.39,426.43 250.90,425.50C253.41,424.57 255.92,415.00 258.43,415.00C260.93,415.00 263.44,422.03 265.95,423.10C268.46,424.17 270.97,424.71 273.48,424.71C275.98,424.71 278.49,424.30 281.00,423.48C283.51,422.66 286.02,412.25 288.52,412.25C291.03,412.25 293.54,423.75 296.05,423.75C298.56,423.75 301.07,420.36 303.58,420.36C306.08,420.36 308.59,425.60 311.10,425.60C313.61,425.60 316.12,424.04 318.62,423.67C321.13,423.29 323.64,423.10 326.15,423.10C328.66,423.10 331.17,426.49 333.68,426.49C336.18,426.49 338.69,425.19 341.20,423.94C343.71,422.70 346.22,419.03 348.73,419.03C351.23,419.03 353.74,425.60 356.25,425.60C358.76,425.60 361.27,422.68 363.78,421.79C366.28,420.90 368.79,421.28 371.30,420.27C373.81,419.27 376.32,411.90 378.83,411.90C381.33,411.90 383.84,430.00 386.35,430.00C388.86,430.00 391.37,425.33 393.88,423.20C396.38,421.08 398.89,417.25 401.40,417.25C403.91,417.25 406.42,429.40 408.93,429.40C411.43,429.40 413.94,423.43 416.45,421.30C418.96,419.17 421.47,416.63 423.98,416.63C426.48,416.63 428.99,422.28 431.50,423.61C434.01,424.94 436.52,424.74 439.03,425.60C441.53,426.46 444.04,428.75 446.55,428.75C449.06,428.75 451.57,427.32 454.08,424.47C456.58,421.62 459.09,405.60 461.60,405.60C464.11,405.60 466.62,416.75 469.12,420.61C471.63,424.47 474.14,428.75 476.65,428.75C479.16,428.75 481.67,408.75 484.18,408.75C486.68,408.75 489.19,428.75 491.70,428.75C494.21,428.75 496.72,401.25 499.23,401.25C501.73,401.25 504.24,422.50 506.75,422.50C509.26,422.50 511.77,422.17 514.27,421.51C516.78,420.84 519.29,410.60 521.80,410.60C524.31,410.60 526.82,417.84 529.33,419.38C531.83,420.93 534.34,421.10 536.85,421.70C539.36,422.30 541.87,422.13 544.38,423.00C546.88,423.87 549.39,433.10 551.90,433.10C554.41,433.10 556.92,428.13 559.43,428.13C561.93,428.13 564.44,431.90 566.95,431.90C569.46,431.90 571.97,429.90 574.48,428.75C576.98,427.60 579.49,425.00 582.00,425.00C584.51,425.00 587.02,425.00 589.53,425.00C592.03,425.00 594.54,426.90 597.05,426.90C599.56,426.90 602.07,387.50 604.58,387.50C607.08,387.50 609.59,424.97 612.10,425.87C614.61,426.77 617.12,427.22 619.62,427.22C622.13,427.22 624.64,424.92 627.15,420.70C629.66,416.48 632.17,401.90 634.68,401.90C637.18,401.90 639.69,422.50 642.20,425.00C644.71,427.50 647.22,428.75 649.73,428.75C652.23,428.75 654.74,427.67 657.25,425.50C659.76,423.33 662.27,414.40 664.78,414.40C667.28,414.40 669.79,429.40 672.30,429.40C674.81,429.40 677.32,420.60 679.83,420.60C682.33,420.60 684.84,424.24 687.35,424.54C689.86,424.85 692.37,424.69 694.88,425.00C697.38,425.31 699.89,427.11 702.40,427.11C704.91,427.11 707.42,422.50 709.93,422.50C712.43,422.50 714.94,426.62 717.45,427.87C719.96,429.12 722.47,430.00 724.98,430.00C727.48,430.00 729.99,428.10 732.50,428.10C735.01,428.10 737.52,430.00 740.03,430.00C742.53,430.00 745.04,425.78 747.55,424.97C750.06,424.16 752.57,423.75 755.08,423.75C757.58,423.75 760.09,425.60 762.60,425.60C765.11,425.60 767.62,423.75 770.12,421.90" fill="none" stroke="#9d99e3" stroke-width="1.3"/><line x1="461.6" y1="298.5" x2="461.6" y2="471.6" stroke="#cfcfcf" stroke-width="1"/><circle cx="461.6" cy="345.3" r="2.2" fill="#8480c4" stroke="#f2f2f2" stroke-width="1"/><circle cx="461.6" cy="405.8" r="2.2" fill="#8480c4" stroke="#f2f2f2" stroke-width="1"/></svg>
<div class="t" style="left:50.80px;top:297.05px;font-size:8.55px;line-height:8.55px;color:#828282;font-weight:400;letter-spacing:0px;transform:translateX(-100%) scaleY(1.0);transform-origin:0 6.55px;">768ms</div>
<div class="t" style="left:50.80px;top:377.75px;font-size:8.55px;line-height:8.55px;color:#828282;font-weight:400;letter-spacing:0px;transform:translateX(-100%) scaleY(1.0);transform-origin:0 6.55px;">400ms</div>
<div class="t" style="left:50.80px;top:422.95px;font-size:8.55px;line-height:8.55px;color:#828282;font-weight:400;letter-spacing:0px;transform:translateX(-100%) scaleY(1.0);transform-origin:0 6.55px;">200ms</div>
<div class="t" style="left:50.80px;top:468.65px;font-size:8.55px;line-height:8.55px;color:#828282;font-weight:400;letter-spacing:0px;transform:translateX(-100%) scaleY(1.0);transform-origin:0 6.55px;">0ms</div>
<div class="t" style="left:19.6px;top:385px;font-size:8.55px;line-height:8.55px;color:#828282;transform:translate(-50%,-50%) rotate(-90deg);">Latency</div>
<div class="t" style="left:78.00px;top:475.65px;font-size:8.55px;line-height:8.55px;color:#828282;font-weight:400;letter-spacing:0px;transform:translateX(-50%) scaleY(1.0);transform-origin:0 6.55px;">10:15</div>
<div class="t" style="left:108.10px;top:475.65px;font-size:8.55px;line-height:8.55px;color:#828282;font-weight:400;letter-spacing:0px;transform:translateX(-50%) scaleY(1.0);transform-origin:0 6.55px;">11:15</div>
<div class="t" style="left:138.20px;top:475.65px;font-size:8.55px;line-height:8.55px;color:#828282;font-weight:400;letter-spacing:0px;transform:translateX(-50%) scaleY(1.0);transform-origin:0 6.55px;">12:15</div>
<div class="t" style="left:168.30px;top:475.65px;font-size:8.55px;line-height:8.55px;color:#828282;font-weight:400;letter-spacing:0px;transform:translateX(-50%) scaleY(1.0);transform-origin:0 6.55px;">13:15</div>
<div class="t" style="left:198.40px;top:475.65px;font-size:8.55px;line-height:8.55px;color:#828282;font-weight:400;letter-spacing:0px;transform:translateX(-50%) scaleY(1.0);transform-origin:0 6.55px;">14:15</div>
<div class="t" style="left:228.50px;top:475.65px;font-size:8.55px;line-height:8.55px;color:#828282;font-weight:400;letter-spacing:0px;transform:translateX(-50%) scaleY(1.0);transform-origin:0 6.55px;">15:15</div>
<div class="t" style="left:258.60px;top:475.65px;font-size:8.55px;line-height:8.55px;color:#828282;font-weight:400;letter-spacing:0px;transform:translateX(-50%) scaleY(1.0);transform-origin:0 6.55px;">16:15</div>
<div class="t" style="left:288.70px;top:475.65px;font-size:8.55px;line-height:8.55px;color:#828282;font-weight:400;letter-spacing:0px;transform:translateX(-50%) scaleY(1.0);transform-origin:0 6.55px;">17:15</div>
<div class="t" style="left:318.80px;top:475.65px;font-size:8.55px;line-height:8.55px;color:#828282;font-weight:400;letter-spacing:0px;transform:translateX(-50%) scaleY(1.0);transform-origin:0 6.55px;">18:15</div>
<div class="t" style="left:348.90px;top:475.65px;font-size:8.55px;line-height:8.55px;color:#828282;font-weight:400;letter-spacing:0px;transform:translateX(-50%) scaleY(1.0);transform-origin:0 6.55px;">19:15</div>
<div class="t" style="left:379.00px;top:475.65px;font-size:8.55px;line-height:8.55px;color:#828282;font-weight:400;letter-spacing:0px;transform:translateX(-50%) scaleY(1.0);transform-origin:0 6.55px;">20:15</div>
<div class="t" style="left:409.10px;top:475.65px;font-size:8.55px;line-height:8.55px;color:#828282;font-weight:400;letter-spacing:0px;transform:translateX(-50%) scaleY(1.0);transform-origin:0 6.55px;">21:15</div>
<div class="t" style="left:439.20px;top:475.65px;font-size:8.55px;line-height:8.55px;color:#828282;font-weight:400;letter-spacing:0px;transform:translateX(-50%) scaleY(1.0);transform-origin:0 6.55px;">22:15</div>
<div class="t" style="left:469.30px;top:475.65px;font-size:8.55px;line-height:8.55px;color:#828282;font-weight:400;letter-spacing:0px;transform:translateX(-50%) scaleY(1.0);transform-origin:0 6.55px;">23:15</div>
<div class="t" style="left:499.40px;top:475.65px;font-size:8.55px;line-height:8.55px;color:#828282;font-weight:400;letter-spacing:0px;transform:translateX(-50%) scaleY(1.0);transform-origin:0 6.55px;">00:15</div>
<div class="t" style="left:529.50px;top:475.65px;font-size:8.55px;line-height:8.55px;color:#828282;font-weight:400;letter-spacing:0px;transform:translateX(-50%) scaleY(1.0);transform-origin:0 6.55px;">01:15</div>
<div class="t" style="left:559.60px;top:475.65px;font-size:8.55px;line-height:8.55px;color:#828282;font-weight:400;letter-spacing:0px;transform:translateX(-50%) scaleY(1.0);transform-origin:0 6.55px;">02:15</div>
<div class="t" style="left:589.70px;top:475.65px;font-size:8.55px;line-height:8.55px;color:#828282;font-weight:400;letter-spacing:0px;transform:translateX(-50%) scaleY(1.0);transform-origin:0 6.55px;">03:15</div>
<div class="t" style="left:619.80px;top:475.65px;font-size:8.55px;line-height:8.55px;color:#828282;font-weight:400;letter-spacing:0px;transform:translateX(-50%) scaleY(1.0);transform-origin:0 6.55px;">04:15</div>
<div class="t" style="left:649.90px;top:475.65px;font-size:8.55px;line-height:8.55px;color:#828282;font-weight:400;letter-spacing:0px;transform:translateX(-50%) scaleY(1.0);transform-origin:0 6.55px;">05:15</div>
<div class="t" style="left:680.00px;top:475.65px;font-size:8.55px;line-height:8.55px;color:#828282;font-weight:400;letter-spacing:0px;transform:translateX(-50%) scaleY(1.0);transform-origin:0 6.55px;">06:15</div>
<div class="t" style="left:710.10px;top:475.65px;font-size:8.55px;line-height:8.55px;color:#828282;font-weight:400;letter-spacing:0px;transform:translateX(-50%) scaleY(1.0);transform-origin:0 6.55px;">07:15</div>
<div class="t" style="left:740.20px;top:475.65px;font-size:8.55px;line-height:8.55px;color:#828282;font-weight:400;letter-spacing:0px;transform:translateX(-50%) scaleY(1.0);transform-origin:0 6.55px;">08:15</div>
<div class="t" style="left:770.30px;top:475.65px;font-size:8.55px;line-height:8.55px;color:#828282;font-weight:400;letter-spacing:0px;transform:translateX(-50%) scaleY(1.0);transform-origin:0 6.55px;">09:15</div>
<div class="b" style="left:468px;top:354.5px;width:124px;height:38px;background:#0a0a0a;border:1px solid #2a2a2a;box-sizing:border-box;"></div>
<div class="t" style="left:473.70px;top:364.45px;font-size:8.55px;line-height:8.55px;color:#f0f0f0;font-weight:400;letter-spacing:0px;transform:scaleY(1.0);transform-origin:0 6.55px;">Apr 17, 23:00</div>
<div class="t" style="left:473.70px;top:376.75px;font-size:8.55px;line-height:8.55px;color:#f0f0f0;font-weight:400;letter-spacing:0px;transform:scaleY(1.0);transform-origin:0 6.55px;">Latency: 289ms &#8211; 560ms</div>
<svg class="b" style="left:360px;top:490px" width="12" height="8"><line x1="0.5" y1="4" x2="9.5" y2="4" stroke="#8884d8" stroke-width="1.3"/><circle cx="5" cy="4" r="2" fill="#171717" stroke="#8884d8" stroke-width="1.1"/></svg>
<div class="t" style="left:371.50px;top:490.45px;font-size:8.55px;line-height:8.55px;color:#9d99e6;font-weight:400;letter-spacing:0px;transform:scaleY(1.0);transform-origin:0 6.55px;">Min/Max Range</div>
</body></html>
